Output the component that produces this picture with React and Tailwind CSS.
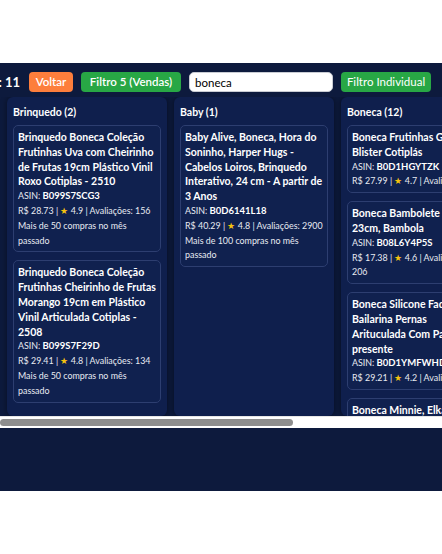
import React from "react";

const columns = [
  {
    name: "Brinquedo",
    count: 2,
    items: [
      {
        title: "Brinquedo Boneca Coleção Frutinhas Uva com Cheirinho de Frutas 19cm Plástico Vinil Roxo Cotiplas - 2510",
        asin: "B099S7SCG3",
        price: "28.73",
        rating: "4.9",
        reviews: "156",
        bought: "Mais de 50 compras no mês passado",
      },
      {
        title: "Brinquedo Boneca Coleção Frutinhas Cheirinho de Frutas Morango 19cm em Plástico Vinil Articulada Cotiplas - 2508",
        asin: "B099S7F29D",
        price: "29.41",
        rating: "4.8",
        reviews: "134",
        bought: "Mais de 50 compras no mês passado",
      },
    ],
  },
  {
    name: "Baby",
    count: 1,
    items: [
      {
        title: "Baby Alive, Boneca, Hora do Soninho, Harper Hugs - Cabelos Loiros, Brinquedo Interativo, 24 cm - A partir de 3 Anos",
        asin: "B0D6141L18",
        price: "40.29",
        rating: "4.8",
        reviews: "2900",
        bought: "Mais de 100 compras no mês passado",
      },
    ],
  },
  {
    name: "Boneca",
    count: 12,
    overflow: true,
    items: [
      { title: "Boneca Frutinhas Gelatina Blister Cotiplás", asin: "B0D1HGYTZK", price: "27.99", rating: "4.7", reviews: "8" },
      { title: "Boneca Bambolete Rosa 23cm, Bambola", asin: "B08L6Y4P5S", price: "17.38", rating: "4.6", reviews: "206" },
      { title: "Boneca Silicone Fada Bailarina Pernas Arituculada Com Pacote presente", asin: "B0D1YMFWHD", price: "29.21", rating: "4.2", reviews: "5" },
      { title: "Boneca Minnie, Elka Disney Junior 25cm com Acessórios", asin: "B0C4K2M7QX", price: "54.90", rating: "4.7", reviews: "88" },
      { title: "Boneca Reborn Bebê Menina Corpo de Silicone 48cm", asin: "B0BX9T3LNP", price: "139.90", rating: "4.5", reviews: "312" },
      { title: "Boneca Princesa Disney Frozen Elsa Clássica", asin: "B07RT5QHVZ", price: "79.99", rating: "4.8", reviews: "1204" },
    ],
  },
  {
    name: "Bebê",
    count: 1,
    items: [
      { title: "Boneca Bebê Primeiros Cuidados com Mamadeira e Chupeta", asin: "B09KQ2W8RT", price: "45.50", rating: "4.6", reviews: "73" },
    ],
  },
];

function Card({ item }) {
  return (
    <div className="rounded-[5px] border border-[#2d3e70] bg-[#10214f] px-[4px] pt-[4px] pb-[3px] leading-[14.8px]">
      <div className="text-[10.5px] font-bold text-white">{item.title}</div>
      <div className="text-[8.9px] text-[#e8ebf2]">
        ASIN: <span className="text-[9.5px] font-bold text-white">{item.asin}</span>
      </div>
      <div className="text-[8.9px] text-[#e8ebf2]">
        R$ {item.price} | <span className="text-[8.5px] text-[#f4c20d]">★</span> {item.rating} | Avaliações: {item.reviews}
      </div>
      {item.bought && <div className="text-[8.9px] text-[#e8ebf2]">{item.bought}</div>}
    </div>
  );
}

function Column({ col }) {
  const gutter = col.overflow ? "pr-[20px]" : "pr-[6px]";
  return (
    <div className={`h-[319px] w-[160px] shrink-0 overflow-hidden rounded-[6px] bg-[#0f1f4d] pl-[6px] pt-[8px] shadow-[0_0_6px_rgba(0,0,0,0.45)] ${gutter}`}>
      <div className="text-[10.5px] font-bold leading-[15px] text-white">
        {col.name} ({col.count})
      </div>
      <div className="mt-[5px] flex flex-col gap-[8px] pb-[8px]">
        {col.items.map((it) => (
          <Card key={it.asin} item={it} />
        ))}
      </div>
    </div>
  );
}

export default function App() {
  return (
    <div className="min-h-screen bg-white pt-[63px] font-['Lato','Noto_Sans',sans-serif]">
      <div className="h-[428px] bg-[#0d1a3d]">
        <div className="flex h-[34px] items-start justify-end gap-[8px] overflow-hidden pt-[9px] pr-[11px]">
          <span className="mr-[1px] shrink-0 text-[13px] font-bold leading-[20px] text-white">Total de itens: 11</span>
          <button className="h-[20px] w-[44px] shrink-0 rounded-[4px] bg-[#fd7e3c] text-[11.5px] font-semibold text-white">
            Voltar
          </button>
          <button className="h-[20px] w-[100px] shrink-0 rounded-[4px] bg-[#28a745] text-[11.5px] font-semibold text-white">
            Filtro 5 (Vendas)
          </button>
          <input
            readOnly
            value="boneca"
            className="h-[20px] w-[144px] shrink-0 rounded-[5px] border border-[#c9ccd3] bg-white px-[5px] text-[11.5px] text-black outline-none"
          />
          <button className="h-[20px] w-[90px] shrink-0 rounded-[4px] bg-[#28a745] text-[11.5px] text-white">
            Filtro Individual
          </button>
        </div>

        {/* board of category columns, scrolled to the far left */}
        <div className="flex gap-[7px] overflow-hidden pl-[7px]">
          {columns.map((c) => (
            <Column key={c.name} col={c} />
          ))}
        </div>

        {/* horizontal scrollbar of the board */}
        <div className="h-[12px] border-t border-[#e6e6e6] bg-white pt-[2px]">
          <div className="h-[7px] w-[293px] rounded-full bg-[#8e8e8e]" />
        </div>
      </div>
    </div>
  );
}
